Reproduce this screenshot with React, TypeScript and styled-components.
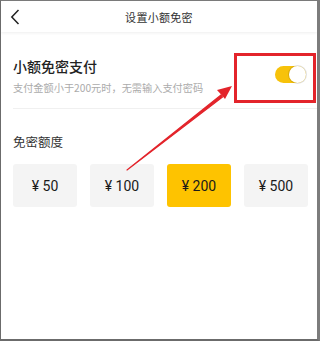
import { createGlobalStyle } from "styled-components";
import styled from "styled-components";

const GlobalStyle = createGlobalStyle`
	html, body {
		margin: 0;
		padding: 0;
		background: #ffffff;
	}
	body {
		font-family: "Noto Sans CJK SC", "Noto Sans", Roboto, sans-serif;
	}
	* {
		box-sizing: border-box;
	}
`;

const Page = styled.div`
	position: relative;
	width: 320px;
	height: 341px;
	background: #ffffff;
	border-left: 1px solid #6b6b6b;
	border-top: 1px solid #7a7a7a;
	border-right: 3px solid #7c7c7c;
	border-bottom: 2px solid #6b6b6b;
	overflow: hidden;
`;

const Header = styled.header`
	position: relative;
	display: flex;
	align-items: center;
	justify-content: center;
	height: 31px;
	background: #ffffff;
	box-shadow: 0 1px 3px rgba(0, 0, 0, 0.07);
`;

const BackButton = styled.button`
	position: absolute;
	left: 6px;
	top: 7px;
	display: flex;
	align-items: center;
	justify-content: center;
	width: 16px;
	height: 18px;
	padding: 0;
	border: none;
	background: none;
`;

const Title = styled.h1`
	margin: 0;
	font-size: 11px;
	font-weight: 400;
	color: #333333;
	letter-spacing: 0.3px;
`;

const Content = styled.main`
	padding: 0 0 0 12px;
`;

const SwitchRow = styled.section`
	display: flex;
	justify-content: space-between;
	align-items: flex-start;
	margin-top: 24px;
	padding: 0 11px 12px 0;
	border-bottom: 1px solid #f0f0f0;
`;

const RowText = styled.div`
	display: flex;
	flex-direction: column;
`;

const RowTitle = styled.h2`
	margin: 0;
	font-size: 14px;
	line-height: 20px;
	font-weight: 500;
	color: #222222;
`;

const RowHint = styled.p`
	margin: 4px 0 0;
	font-size: 10.2px;
	line-height: 16px;
	color: #ababab;
`;

const Toggle = styled.span<{ $on: boolean }>`
	position: relative;
	display: block;
	width: 31px;
	height: 17px;
	margin-top: 10px;
	border-radius: 9px;
	background: ${(p) => (p.$on ? "#f7c20a" : "#e5e5e5")};

	&::after {
		content: "";
		position: absolute;
		top: 0;
		left: ${(p) => (p.$on ? "14px" : "0")};
		width: 17px;
		height: 17px;
		border-radius: 50%;
		background: #ffffff;
		box-shadow: 0 0 0 1px rgba(0, 0, 0, 0.12);
	}
`;

const SectionLabel = styled.h3`
	margin: 24px 0 0;
	font-size: 12.5px;
	line-height: 18px;
	font-weight: 400;
	color: #333333;
`;

const AmountGrid = styled.div`
	display: grid;
	grid-template-columns: repeat(4, 64px);
	column-gap: 13px;
	margin-top: 13px;
`;

const AmountButton = styled.button<{ $active: boolean }>`
	height: 43px;
	padding: 0;
	border: none;
	border-radius: 3px;
	background: ${(p) => (p.$active ? "#fec300" : "#f4f4f4")};
	font-family: Roboto, "Noto Sans CJK SC", sans-serif;
	font-size: 14px;
	font-weight: 400;
	color: #1a1a1a;
`;

const Annotation = styled.svg`
	position: absolute;
	left: -1px;
	top: -1px;
	width: 320px;
	height: 341px;
	pointer-events: none;
`;

const amounts = [50, 100, 200, 500];

export default function App() {
	const selected = 200;
	return (
		<>
			<GlobalStyle />
			<Page>
				<Header>
					<BackButton aria-label="返回">
						<svg width="10" height="16" viewBox="0 0 10 16">
							<path
								d="M8.5 1 L1.8 8 L8.5 15"
								fill="none"
								stroke="#222"
								strokeWidth="1.5"
							/>
						</svg>
					</BackButton>
					<Title>设置小额免密</Title>
				</Header>
				<Content>
					<SwitchRow>
						<RowText>
							<RowTitle>小额免密支付</RowTitle>
							<RowHint>支付金额小于200元时，无需输入支付密码</RowHint>
						</RowText>
						<Toggle $on />
					</SwitchRow>
					<SectionLabel>免密额度</SectionLabel>
					<AmountGrid>
						{amounts.map((a) => (
							<AmountButton key={a} $active={a === selected}>
								¥ {a}
							</AmountButton>
						))}
					</AmountGrid>
				</Content>
				<Annotation viewBox="0 0 320 341">
					<rect
						x="235.5"
						y="54.5"
						width="79"
						height="47"
						fill="none"
						stroke="#e3242b"
						strokeWidth="3"
					/>
					<path
						d="M127 170 L221 95 L222.5 97 Z"
						fill="#e3242b"
						stroke="#e3242b"
						strokeWidth="1.2"
						strokeLinejoin="round"
					/>
					<path d="M232 86 L217 90 L225 99 Z" fill="#e3242b" />
				</Annotation>
			</Page>
		</>
	);
}
